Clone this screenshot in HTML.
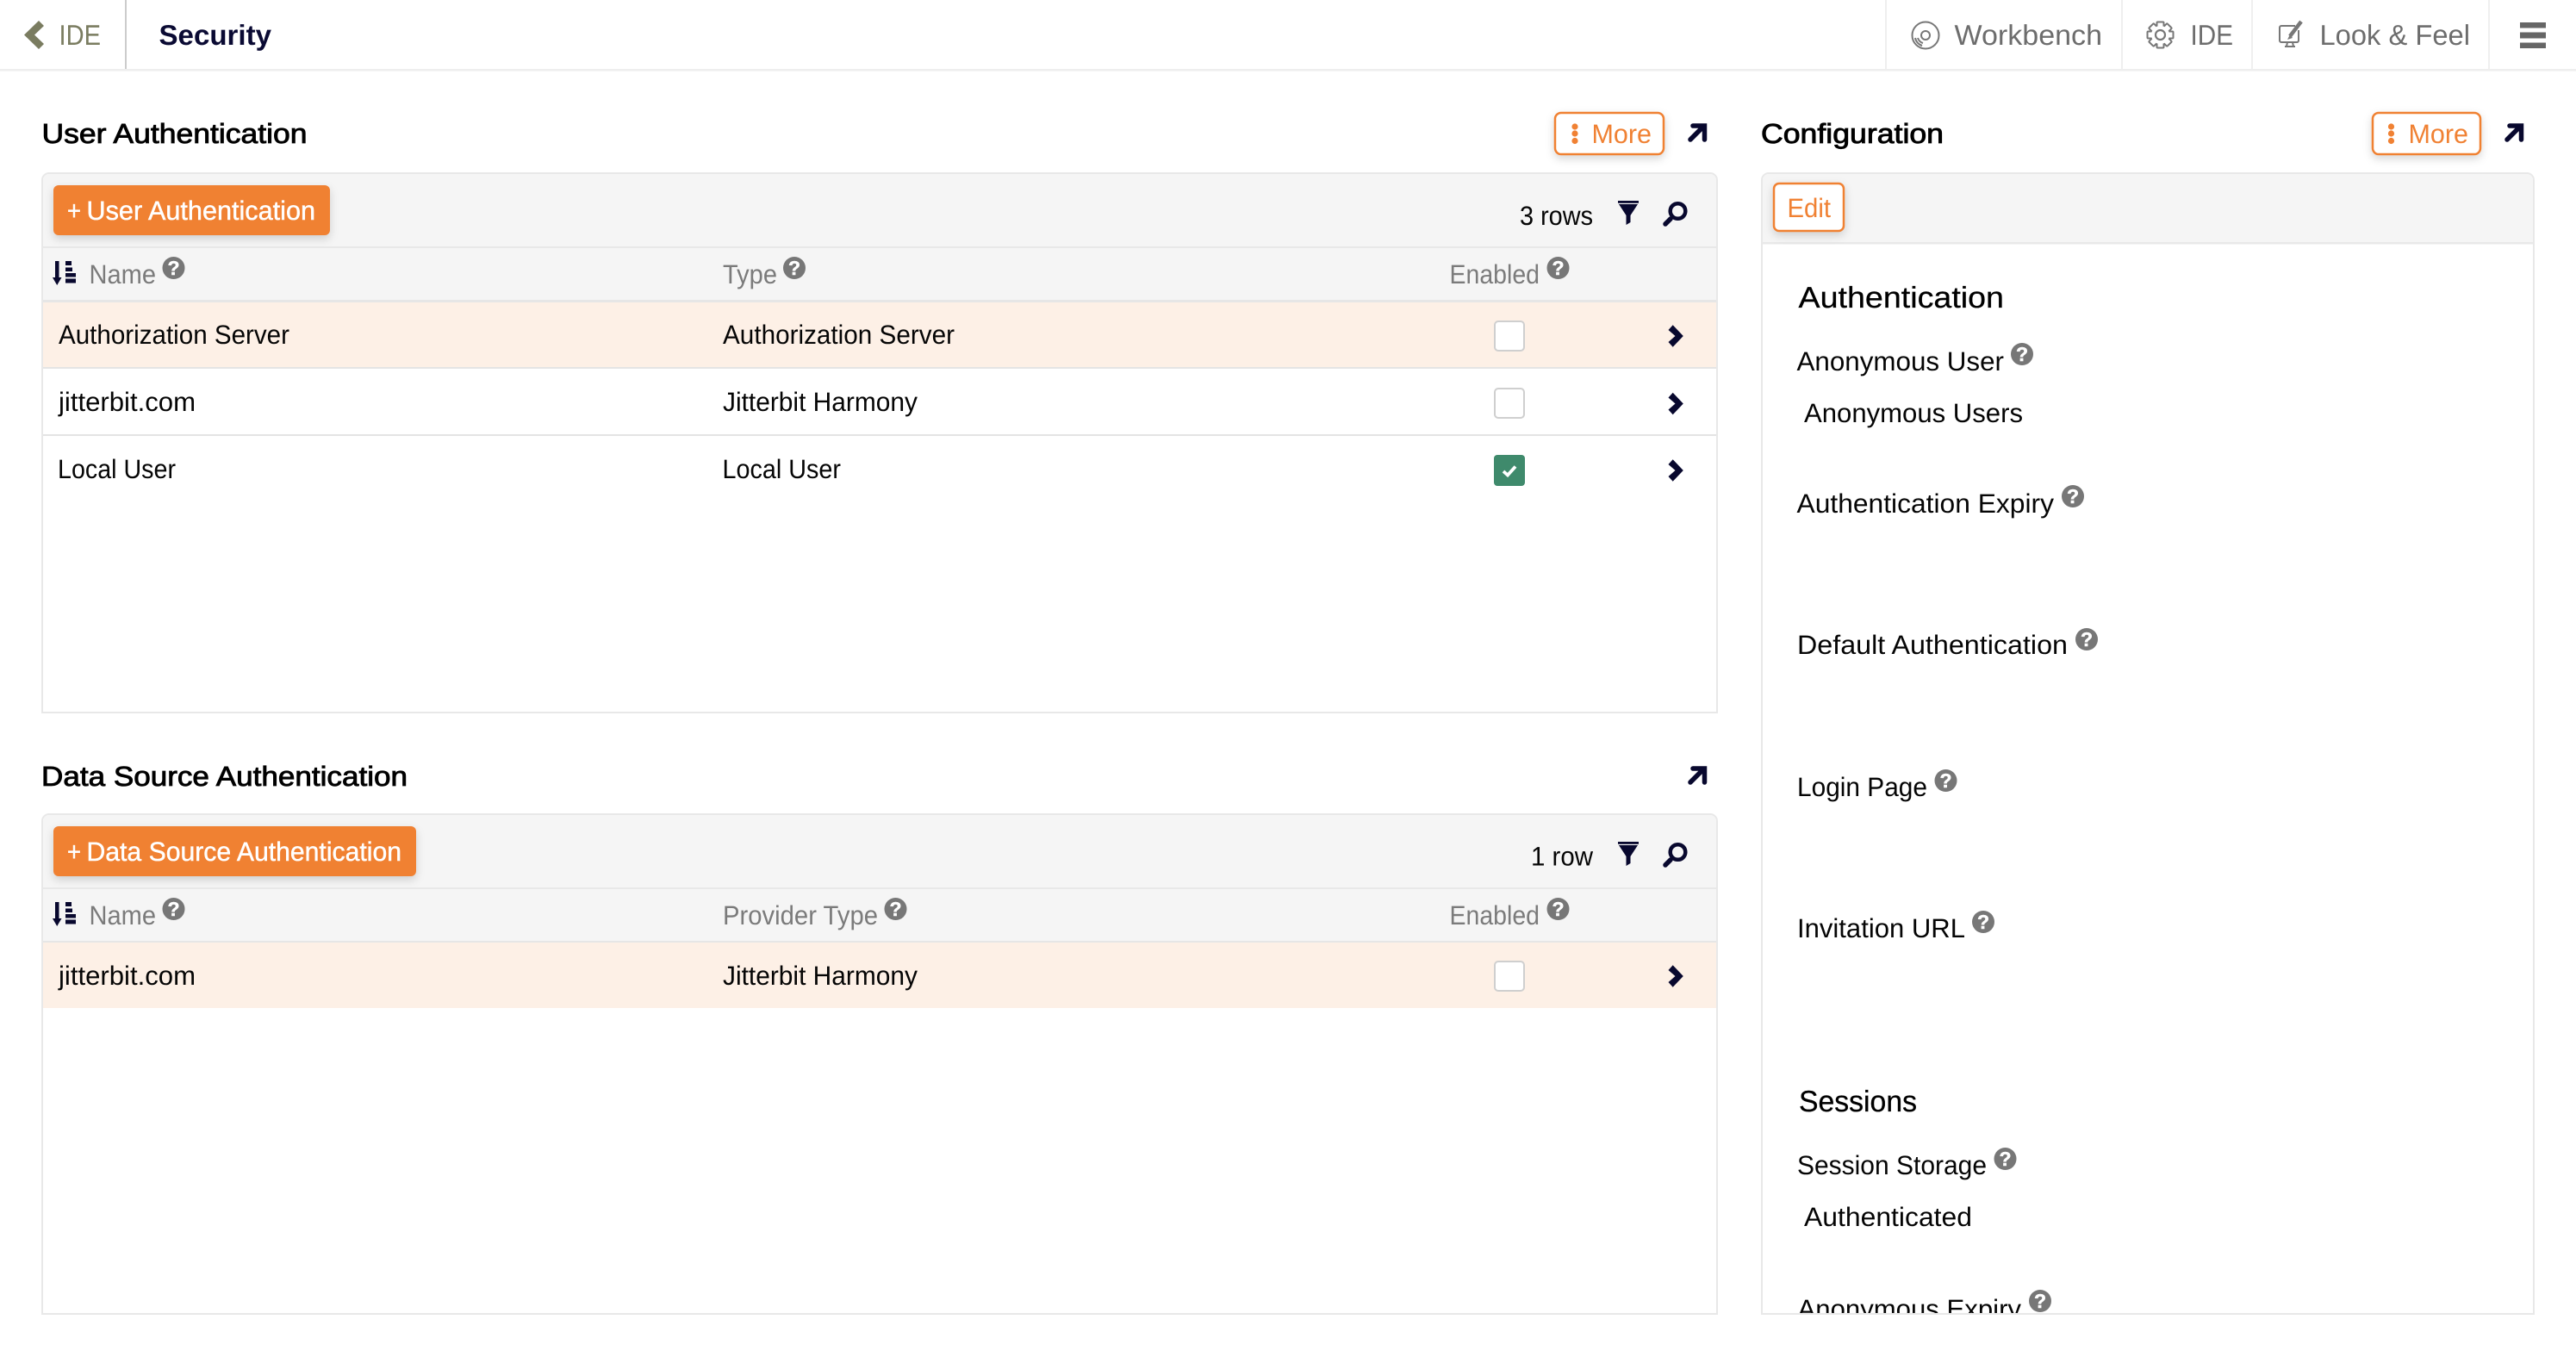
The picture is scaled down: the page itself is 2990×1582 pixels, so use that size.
<!DOCTYPE html>
<html lang="en">
<head>
<meta charset="utf-8">
<title>Security</title>
<style>
html,body{margin:0;padding:0;background:#fff;width:2990px;height:1582px;overflow:hidden}
svg{display:block}
text{font-family:"Liberation Sans",sans-serif;text-rendering:geometricPrecision}
.b{font-size:31px;fill:#050505}
.h{font-size:31px;fill:#7b7b7b}
.t{font-size:32px;fill:#000;stroke:#000;stroke-width:.85px}
.n{font-size:33px;fill:#6d6d6d}
.o{font-size:31px;fill:#f08133}
.w{font-size:31px;fill:#fff;stroke:#fff;stroke-width:.45px}
.s{font-size:34.5px;fill:#000;stroke:#000;stroke-width:.3px}
.q{font-size:23px;font-weight:700;fill:#fff;text-anchor:middle;stroke:#fff;stroke-width:.5px}
.hc{fill:#777}
.cb{fill:#fff;stroke:#cfcfcf;stroke-width:2}
.nv{fill:#08082e}
.ar{fill:none;stroke:#08082e;stroke-width:5.5;stroke-linecap:round}
.ic{fill:none;stroke:#777;stroke-width:2}
</style>
</head>
<body>
<svg width="2990" height="1582" viewBox="0 0 2990 1582" xmlns="http://www.w3.org/2000/svg">
<defs>
<filter id="sh" x="-20%" y="-30%" width="140%" height="170%"><feDropShadow dx="0" dy="4" stdDeviation="5" flood-color="#000" flood-opacity=".16"/></filter>
</defs>
<rect width="2990" height="1582" fill="#fff"/>

<!-- top bar -->
<rect x="0" y="80" width="2990" height="2.5" fill="#eeeeee"/>
<rect x="145" y="0" width="2" height="80" fill="#cccccc"/>
<rect x="2188" y="0" width="2" height="80" fill="#efefef"/>
<rect x="2462" y="0" width="2" height="80" fill="#efefef"/>
<rect x="2613" y="0" width="2" height="80" fill="#efefef"/>
<rect x="2888" y="0" width="2" height="80" fill="#efefef"/>
<polygon points="28,40.5 45,24 51,30 40,40.5 51,51 45,57" fill="#7a7c60"/>
<text x="68.500" y="52" textLength="48.500" lengthAdjust="spacingAndGlyphs" font-size="33" fill="#7a7c60">IDE</text>
<text x="184.500" y="52" textLength="130.500" lengthAdjust="spacingAndGlyphs" font-size="33" font-weight="700" fill="#0a0a33">Security</text>

<!-- disc icon -->
<circle cx="2235" cy="41" r="15.500" class="ic"/>
<circle cx="2235" cy="41" r="5" class="ic" stroke-width="2.400"/>
<path d="M2223 44a12 12 0 0 0 8 9M2226 44a9 9 0 0 0 6 6" class="ic" stroke-width="1.200"/>
<text x="2268.500" y="52" textLength="171.500" lengthAdjust="spacingAndGlyphs" class="n">Workbench</text>

<!-- gear icon -->
<g transform="translate(2507.5 40.5)">
<g fill="#fff" stroke="#777" stroke-width="2">
<rect x="-4" y="-15" width="8" height="8" rx="1"/>
<rect x="-4" y="-15" width="8" height="8" rx="1" transform="rotate(45)"/>
<rect x="-4" y="-15" width="8" height="8" rx="1" transform="rotate(90)"/>
<rect x="-4" y="-15" width="8" height="8" rx="1" transform="rotate(135)"/>
<rect x="-4" y="-15" width="8" height="8" rx="1" transform="rotate(180)"/>
<rect x="-4" y="-15" width="8" height="8" rx="1" transform="rotate(225)"/>
<rect x="-4" y="-15" width="8" height="8" rx="1" transform="rotate(270)"/>
<rect x="-4" y="-15" width="8" height="8" rx="1" transform="rotate(315)"/>
</g>
<circle r="10.500" fill="#fff"/>
<circle r="5.500" fill="none" stroke="#777" stroke-width="2.200"/>
</g>
<text x="2542.500" y="52" textLength="49.500" lengthAdjust="spacingAndGlyphs" class="n">IDE</text>

<!-- look & feel icon -->
<path d="M2664 30H2648a2 2 0 0 0-2 2V47a2 2 0 0 0 2 2H2666a2 2 0 0 0 2-2V35" class="ic" stroke-width="2.800"/>
<path d="M2652 54h12M2655 49l-1 5M2661 49l1 5" class="ic" stroke-width="2"/>
<path d="M2671 25L2658 42" fill="none" stroke="#777" stroke-width="4.500"/>
<path d="M2658 40l-3 6 6-2z" fill="#777"/>
<text x="2692.500" y="52" textLength="174.500" lengthAdjust="spacingAndGlyphs" class="n">Look &amp; Feel</text>

<!-- hamburger -->
<rect x="2925" y="26" width="30" height="6.500" fill="#666"/>
<rect x="2925" y="37.500" width="30" height="7" fill="#666"/>
<rect x="2925" y="49.500" width="30" height="6.500" fill="#666"/>

<!-- User Authentication section -->
<text x="48.500" y="166" textLength="308" lengthAdjust="spacingAndGlyphs" class="t">User Authentication</text>
<rect x="1805" y="131" width="126" height="48" rx="7" fill="#fff" stroke="#f08133" stroke-width="2.500" filter="url(#sh)"/>
<circle cx="1828" cy="147" r="3.600" fill="#f08133"/><circle cx="1828" cy="155" r="3.600" fill="#f08133"/><circle cx="1828" cy="163.500" r="3.600" fill="#f08133"/>
<text x="1847.500" y="166" textLength="69.500" lengthAdjust="spacingAndGlyphs" class="o">More</text>
<path d="M1962 162L1977 147M1965 146H1978.500V162" class="ar"/>

<path d="M49 827V209a8 8 0 0 1 8-8H1985a8 8 0 0 1 8 8V827Z" fill="#fff" stroke="#e8e8e8" stroke-width="2"/>
<path d="M50 350V209a7 7 0 0 1 7-7H1985a7 7 0 0 1 7 7V350Z" fill="#f5f5f5"/>
<rect x="50" y="286" width="1942" height="2" fill="#e8e8e8"/>
<rect x="50" y="348" width="1942" height="3" fill="#e6e6e6"/>
<rect x="50" y="351" width="1942" height="75" fill="#fdf0e6"/>
<rect x="50" y="426" width="1942" height="2" fill="#e4e4e4"/>
<rect x="50" y="504" width="1942" height="2" fill="#e4e4e4"/>

<rect x="62" y="215" width="321" height="58" rx="6" fill="#f08133" filter="url(#sh)"/>
<text x="78" y="255" textLength="16" lengthAdjust="spacingAndGlyphs" class="w">+</text>
<text x="100.500" y="255" textLength="265.500" lengthAdjust="spacingAndGlyphs" class="w">User Authentication</text>
<text x="1764" y="261" textLength="85" lengthAdjust="spacingAndGlyphs" class="b">3 rows</text>

<!-- funnel / search -->
<g class="nv">
<rect x="1878" y="233" width="24" height="2.800"/>
<polygon points="1879,237 1901,237 1892.500,250 1892.500,258 1887.500,261 1887.500,250"/>
</g>
<circle cx="1947.500" cy="245" r="8.800" fill="none" stroke="#08082e" stroke-width="4.500"/>
<path d="M1939 254L1933 260" stroke="#08082e" stroke-width="5.500" stroke-linecap="round"/>

<!-- sort icon -->
<g class="nv">
<rect x="64" y="303" width="4.500" height="22"/>
<polygon points="61,322 71.500,322 66.200,331"/>
<rect x="76" y="303" width="7" height="5"/><rect x="76" y="310.500" width="8" height="4.500"/><rect x="76" y="317" width="12" height="4.500"/><rect x="76" y="323.500" width="12" height="5"/>
</g>
<text x="103.500" y="329" textLength="77.500" lengthAdjust="spacingAndGlyphs" class="h">Name</text>
<circle cx="201.500" cy="311" r="13" class="hc"/><text x="201.500" y="319" class="q">?</text>
<text x="839" y="329" textLength="63" lengthAdjust="spacingAndGlyphs" class="h">Type</text>
<circle cx="922" cy="311" r="13" class="hc"/><text x="922" y="319" class="q">?</text>
<text x="1682.500" y="329" textLength="104.500" lengthAdjust="spacingAndGlyphs" class="h">Enabled</text>
<circle cx="1808.500" cy="311" r="13" class="hc"/><text x="1808.500" y="319" class="q">?</text>

<text x="68" y="399" textLength="268" lengthAdjust="spacingAndGlyphs" class="b">Authorization Server</text>
<text x="839" y="399" textLength="269" lengthAdjust="spacingAndGlyphs" class="b">Authorization Server</text>
<rect x="1735" y="373" width="34" height="34" rx="4" class="cb"/>
<polygon class="nv" points="1936.500,383 1941.700,377.300 1953.800,390 1941.700,402.700 1936.500,397 1944.500,390"/>

<text x="68" y="477" textLength="159" lengthAdjust="spacingAndGlyphs" class="b">jitterbit.com</text>
<text x="839" y="477" textLength="226" lengthAdjust="spacingAndGlyphs" class="b">Jitterbit Harmony</text>
<rect x="1735" y="451" width="34" height="34" rx="4" class="cb"/>
<polygon class="nv" points="1936.500,461.500 1941.700,455.800 1953.800,468.500 1941.700,481.200 1936.500,475.500 1944.500,468.500"/>

<text x="67" y="555" textLength="137" lengthAdjust="spacingAndGlyphs" class="b">Local User</text>
<text x="838.500" y="555" textLength="137.500" lengthAdjust="spacingAndGlyphs" class="b">Local User</text>
<rect x="1734" y="528" width="36" height="36" rx="4" fill="#3f8a6c"/>
<path d="M1745 547L1750 551.500L1759 541.500" fill="none" stroke="#fff" stroke-width="3.800"/>
<polygon class="nv" points="1936.500,539 1941.700,533.300 1953.800,546 1941.700,558.700 1936.500,553 1944.500,546"/>

<!-- Data Source section -->
<text x="48" y="912" textLength="425" lengthAdjust="spacingAndGlyphs" class="t">Data Source Authentication</text>
<path d="M1962 908L1977 893M1965 892H1978.500V908" class="ar"/>

<path d="M49 1525V953a8 8 0 0 1 8-8H1985a8 8 0 0 1 8 8V1525Z" fill="#fff" stroke="#e8e8e8" stroke-width="2"/>
<path d="M50 1092V953a7 7 0 0 1 7-7H1985a7 7 0 0 1 7 7V1092Z" fill="#f5f5f5"/>
<rect x="50" y="1030" width="1942" height="2" fill="#e8e8e8"/>
<rect x="50" y="1092" width="1942" height="2.500" fill="#e6e6e6"/>
<rect x="50" y="1094" width="1942" height="76" fill="#fdf0e6"/>

<rect x="62" y="959" width="421" height="58" rx="6" fill="#f08133" filter="url(#sh)"/>
<text x="78" y="999" textLength="16" lengthAdjust="spacingAndGlyphs" class="w">+</text>
<text x="100.500" y="999" textLength="365.500" lengthAdjust="spacingAndGlyphs" class="w">Data Source Authentication</text>
<text x="1777" y="1004.500" textLength="72" lengthAdjust="spacingAndGlyphs" class="b">1 row</text>

<g class="nv">
<rect x="1878" y="977" width="24" height="2.800"/>
<polygon points="1879,981 1901,981 1892.500,994 1892.500,1002 1887.500,1005 1887.500,994"/>
</g>
<circle cx="1947.500" cy="989" r="8.800" fill="none" stroke="#08082e" stroke-width="4.500"/>
<path d="M1939 998L1933 1004" stroke="#08082e" stroke-width="5.500" stroke-linecap="round"/>

<g class="nv">
<rect x="64" y="1047" width="4.500" height="22"/>
<polygon points="61,1066 71.500,1066 66.200,1075"/>
<rect x="76" y="1047" width="7" height="5"/><rect x="76" y="1054.500" width="8" height="4.500"/><rect x="76" y="1061" width="12" height="4.500"/><rect x="76" y="1067.500" width="12" height="5"/>
</g>
<text x="103.500" y="1073" textLength="77.500" lengthAdjust="spacingAndGlyphs" class="h">Name</text>
<circle cx="201.500" cy="1055" r="13" class="hc"/><text x="201.500" y="1063" class="q">?</text>
<text x="839" y="1073" textLength="180" lengthAdjust="spacingAndGlyphs" class="h">Provider Type</text>
<circle cx="1039.500" cy="1055" r="13" class="hc"/><text x="1039.500" y="1063" class="q">?</text>
<text x="1682.500" y="1073" textLength="104.500" lengthAdjust="spacingAndGlyphs" class="h">Enabled</text>
<circle cx="1808.500" cy="1055" r="13" class="hc"/><text x="1808.500" y="1063" class="q">?</text>

<text x="68" y="1143" textLength="159" lengthAdjust="spacingAndGlyphs" class="b">jitterbit.com</text>
<text x="839" y="1143" textLength="226" lengthAdjust="spacingAndGlyphs" class="b">Jitterbit Harmony</text>
<rect x="1735" y="1116" width="34" height="34" rx="4" class="cb"/>
<polygon class="nv" points="1936.500,1126 1941.700,1120.300 1953.800,1133 1941.700,1145.700 1936.500,1140 1944.500,1133"/>

<!-- Configuration -->
<text x="2044" y="166" textLength="212" lengthAdjust="spacingAndGlyphs" class="t">Configuration</text>
<rect x="2754" y="131" width="125" height="48" rx="7" fill="#fff" stroke="#f08133" stroke-width="2.500" filter="url(#sh)"/>
<circle cx="2775.500" cy="147" r="3.600" fill="#f08133"/><circle cx="2775.500" cy="155" r="3.600" fill="#f08133"/><circle cx="2775.500" cy="163.500" r="3.600" fill="#f08133"/>
<text x="2795.500" y="166" textLength="69.500" lengthAdjust="spacingAndGlyphs" class="o">More</text>
<path d="M2910 162L2925 147M2913 146H2926.500V162" class="ar"/>

<path d="M2045 1525V209a8 8 0 0 1 8-8H2933a8 8 0 0 1 8 8V1525Z" fill="#fff" stroke="#e8e8e8" stroke-width="2"/>
<path d="M2046 281V209a7 7 0 0 1 7-7H2933a7 7 0 0 1 7 7V281Z" fill="#f5f5f5"/>
<rect x="2046" y="281" width="894" height="2.500" fill="#e8e8e8"/>
<rect x="2059" y="213" width="81" height="55" rx="6" fill="#fff" stroke="#f08133" stroke-width="2.500" filter="url(#sh)"/>
<text x="2074.500" y="252" textLength="50.500" lengthAdjust="spacingAndGlyphs" class="o">Edit</text>

<text x="2087.500" y="357" textLength="238.500" lengthAdjust="spacingAndGlyphs" class="s">Authentication</text>
<text x="2085.500" y="430" textLength="240.500" lengthAdjust="spacingAndGlyphs" class="b">Anonymous User</text>
<circle cx="2347" cy="411" r="13" class="hc"/><text x="2347" y="419" class="q">?</text>
<text x="2094" y="490" textLength="254" lengthAdjust="spacingAndGlyphs" class="b">Anonymous Users</text>
<text x="2085.500" y="595" textLength="298.500" lengthAdjust="spacingAndGlyphs" class="b">Authentication Expiry</text>
<circle cx="2406" cy="576" r="13" class="hc"/><text x="2406" y="584" class="q">?</text>
<text x="2086" y="759" textLength="314" lengthAdjust="spacingAndGlyphs" class="b">Default Authentication</text>
<circle cx="2422" cy="742" r="13" class="hc"/><text x="2422" y="750" class="q">?</text>
<text x="2086" y="924" textLength="151" lengthAdjust="spacingAndGlyphs" class="b">Login Page</text>
<circle cx="2258.500" cy="906" r="13" class="hc"/><text x="2258.500" y="914" class="q">?</text>
<text x="2086" y="1088" textLength="195" lengthAdjust="spacingAndGlyphs" class="b">Invitation URL</text>
<circle cx="2302" cy="1070" r="13" class="hc"/><text x="2302" y="1078" class="q">?</text>

<text x="2088" y="1290" textLength="137" lengthAdjust="spacingAndGlyphs" class="s">Sessions</text>
<text x="2086" y="1363" textLength="220" lengthAdjust="spacingAndGlyphs" class="b">Session Storage</text>
<circle cx="2327.500" cy="1345" r="13" class="hc"/><text x="2327.500" y="1353" class="q">?</text>
<text x="2094" y="1423" textLength="195" lengthAdjust="spacingAndGlyphs" class="b">Authenticated</text>
<text x="2086.500" y="1530" textLength="259.500" lengthAdjust="spacingAndGlyphs" class="b">Anonymous Expiry</text>
<circle cx="2368" cy="1510" r="13" class="hc"/><text x="2368" y="1518" class="q">?</text>

<!-- clip overflow at bottom of config panel -->
<rect x="2040" y="1526" width="910" height="56" fill="#fff"/>
<rect x="2044" y="1524" width="898" height="2" fill="#e8e8e8"/>
</svg>
</body>
</html>
